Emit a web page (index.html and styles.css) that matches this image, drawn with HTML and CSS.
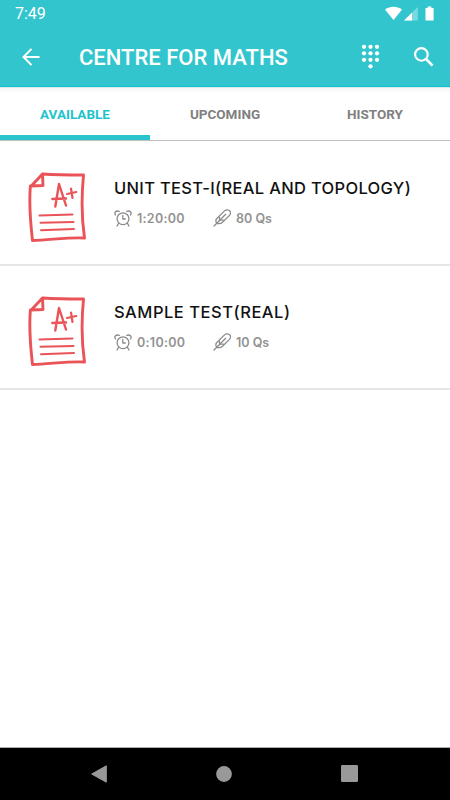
FILE: index.html
```html
<!DOCTYPE html>
<html lang="en">
  <head>
    <meta charset="UTF-8">
    <title>Centre for Maths</title>
    <link rel="stylesheet" href="styles.css">
  </head>
  <body>
    <svg class="symbols" width="0" height="0">
      <symbol id="paper" viewBox="0 0 60 72">
        <g fill="none" stroke="#ea5357" stroke-linecap="round" stroke-linejoin="round">
          <path stroke-width="2.900" d="M14.500 3 C30 4 43 4 55.500 4 C53.500 25 53.500 47 56.500 67 C41 66 22 69 4.500 69.500 C2.500 52 .8 35 2.300 16 L14.500 3 L15 14.500 L2.300 15"/>
          <path stroke-width="2" d="M11.500 44.500 L44.500 43.500 M12.500 51.800 L45.500 51 M13 59.300 L46 58"/>
          <path stroke-width="2.400" d="M27.300 35.500 L31 13 L38 34.500 M24.300 28 L38 27.500"/>
          <path stroke-width="2.200" d="M43 17.500 L44.500 27 M39 23 L48.300 21"/>
        </g>
      </symbol>
      <symbol id="alarm" viewBox="0 0 18 17">
        <g fill="none" stroke="#8a8a8a" stroke-width="1.300" stroke-linecap="round" stroke-linejoin="round">
          <circle cx="9" cy="8.700" r="5.900"/>
          <path d="M8.800 5.500 V9 H11.300 M4.700 13.200 L3 16 M13.300 13.200 L15 16"/>
          <path d="M1.500 5 C-.3 2.400 2.300 .2 5.200 1.400 M16.500 5 C18.300 2.400 15.700 .2 12.800 1.400"/>
        </g>
      </symbol>
      <symbol id="feather" viewBox="0 0 18 18">
        <g fill="none" stroke="#8a8a8a" stroke-width="1.250" stroke-linecap="round" stroke-linejoin="round">
          <path d="M1 17 L12.700 5.300"/>
          <path d="M3.600 14.300 C2.700 12.500 2.700 10.700 3.600 9.800 L11.500 1.900 C13.300 .2 15.800 .6 16.900 2 C18 3.700 17.500 5.300 16.200 6.600 L9.500 13.300 C8 14.700 6 15 3.600 14.300"/>
          <path d="M6.500 11.500 V8.300 M7 11.200 H10.500"/>
        </g>
      </symbol>
    </svg>

    <div class="header">
      <div class="status-bar">
        <span class="clock">7:49</span>
        <svg class="status-icons" width="52" height="16" viewBox="0 0 52 16" fill="#fff">
          <path d="M0 3.500 C5 -.3 12 -.3 17 3.500 L8.500 14 Z"/>
          <path opacity=".35" d="M32.800 1 V14.500 H19 Z"/>
          <path d="M27 6.700 V14.500 H19 Z"/>
          <path d="M42.700 .5 H46.300 V2 H48.600 V14.500 H40.500 V2 H42.700 Z"/>
        </svg>
      </div>
      <div class="toolbar">
        <svg class="back" width="18" height="18" viewBox="0 0 18 18" fill="none" stroke="#fff" stroke-width="2">
          <path d="M17.500 9 H1.500 M9.500 .9 L1.500 9 L9.500 17.100"/>
        </svg>
        <h1>CENTRE FOR MATHS</h1>
        <svg class="dialpad" width="19" height="26" viewBox="0 0 19 26" fill="#fff">
          <circle cx="3" cy="2.800" r="2.150"/><circle cx="9.500" cy="2.800" r="2.150"/><circle cx="16" cy="2.800" r="2.150"/>
          <circle cx="3" cy="9.300" r="2.150"/><circle cx="9.500" cy="9.300" r="2.150"/><circle cx="16" cy="9.300" r="2.150"/>
          <circle cx="3" cy="15.800" r="2.150"/><circle cx="9.500" cy="15.800" r="2.150"/><circle cx="16" cy="15.800" r="2.150"/>
          <circle cx="9.500" cy="22.300" r="2.150"/>
        </svg>
        <svg class="search" width="20" height="20" viewBox="0 0 20 20" fill="none" stroke="#fff">
          <circle cx="7.400" cy="7.400" r="6.300" stroke-width="2.100"/>
          <path d="M12 12 L18.600 18.600" stroke-width="2.600"/>
        </svg>
      </div>
    </div>

    <div class="tabs">
      <a class="tab active">AVAILABLE</a>
      <a class="tab">UPCOMING</a>
      <a class="tab">HISTORY</a>
    </div>

    <div class="content">
      <div class="test">
        <svg class="paper"><use href="#paper"/></svg>
        <div class="info">
          <h2>UNIT TEST-I(REAL AND TOPOLOGY)</h2>
          <div class="meta">
            <svg class="alarm"><use href="#alarm"/></svg>
            <span class="time">1:20:00</span>
            <svg class="feather"><use href="#feather"/></svg>
            <span class="count">80 Qs</span>
          </div>
        </div>
      </div>
      <div class="test">
        <svg class="paper"><use href="#paper"/></svg>
        <div class="info">
          <h2 class="short">SAMPLE TEST(REAL)</h2>
          <div class="meta">
            <svg class="alarm"><use href="#alarm"/></svg>
            <span class="time">0:10:00</span>
            <svg class="feather"><use href="#feather"/></svg>
            <span class="count">10 Qs</span>
          </div>
        </div>
      </div>
    </div>

    <div class="nav-bar">
      <svg width="16" height="18" viewBox="0 0 16 18" fill="#999" stroke="#999" stroke-linejoin="round"><path d="M15.300 .8 V17.200 L.7 9 Z"/></svg>
      <svg width="16" height="16" viewBox="0 0 16 16" fill="#999"><circle cx="8" cy="8" r="7.900"/></svg>
      <svg width="17" height="17" viewBox="0 0 17 17" fill="#999"><rect width="17" height="17" rx="1.200"/></svg>
    </div>
  </body>
</html>
```
FILE: styles.css
```css
body {
  display: flex;
  flex-direction: column;
  height: 800px;
  margin: 0;
  background-color: #fff;
  font-family: Roboto, "Liberation Sans", sans-serif;
  overflow: hidden;
}

svg {
  display: block;
  flex-shrink: 0;
}

.symbols {
  position: absolute;
}

/* Header styles */
.header {
  box-sizing: border-box;
  height: 87px;
  background-color: #33c5cd;
  border-bottom: 1px solid #14c0cb;
  color: #fff;
}

.status-bar {
  display: flex;
  justify-content: space-between;
  height: 28px;
  padding: 0 13px 0 15px;
}

.clock {
  font-size: 16px;
  line-height: 28px;
}

.status-icons {
  margin-top: 6px;
}

.toolbar {
  display: flex;
  align-items: center;
  height: 58px;
  padding-left: 22px;
}

.toolbar h1 {
  width: 282px;
  margin: 2px 0 0 39px;
  font-size: 22px;
  font-weight: 500;
  line-height: 28px;
  white-space: nowrap;
}

.toolbar .dialpad {
  margin-top: -1px;
}

.toolbar .search {
  margin: -1px 0 0 34px;
}

/* Tabs */
.tabs {
  display: flex;
  box-sizing: border-box;
  height: 54px;
  border-top: 1px solid #d9e9ea;
  border-bottom: 1px solid #bdbdbd;
  background: linear-gradient(#f5f5f5, #fff 5px);
}

.tab {
  flex: 1;
  box-sizing: border-box;
  color: #808080;
  font-size: 13.5px;
  font-weight: 700;
  line-height: 52px;
  text-align: center;
}

.tab.active {
  color: #1fc3cc;
  border-bottom: 5px solid #2ac4cc;
}

/* Test list */
.content {
  flex: 1;
}

.test {
  display: flex;
  box-sizing: border-box;
  height: 124px;
  padding: 30px 0 0 28px;
  border-bottom: 2px solid #e6e6e6;
}

.test:first-child {
  height: 125px;
}

.test + .test {
  padding-top: 29px;
}

.paper {
  width: 60px;
  height: 72px;
}

.info {
  margin: 6px 0 0 26px;
  font-family: Inter, Roboto, sans-serif;
}

.info h2 {
  margin: 0;
  color: #111;
  font-size: 16.5px;
  font-weight: 500;
  letter-spacing: 0.32px;
  line-height: 22px;
  white-space: nowrap;
}

.info h2.short {
  letter-spacing: 0.52px;
}

.meta {
  display: flex;
  align-items: center;
  height: 18px;
  margin-top: 10px;
  color: #929292;
  font-size: 12.5px;
  font-weight: 600;
  letter-spacing: 0.3px;
}

.alarm {
  width: 18px;
  height: 17px;
}

.time {
  width: 76px;
  margin-left: 5px;
}

.feather {
  width: 18px;
  height: 18px;
}

.count {
  margin-left: 5px;
  letter-spacing: 0;
}

/* Android navigation */
.nav-bar {
  display: flex;
  align-items: center;
  justify-content: space-between;
  box-sizing: border-box;
  height: 53px;
  padding: 0 92px 1px 91px;
  border-top: 1px solid #aaa;
  background-color: #000;
}
```
